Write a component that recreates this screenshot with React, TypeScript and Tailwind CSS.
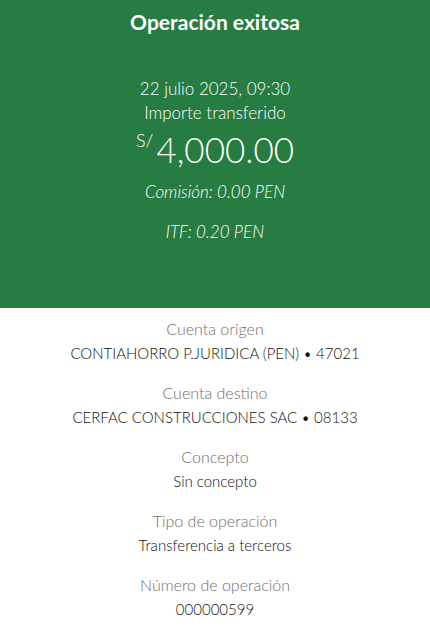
const DETAILS = [
  { label: "Cuenta origen", value: "CONTIAHORRO P.JURIDICA (PEN) • 47021" },
  { label: "Cuenta destino", value: "CERFAC CONSTRUCCIONES SAC • 08133" },
  { label: "Concepto", value: "Sin concepto" },
  { label: "Tipo de operación", value: "Transferencia a terceros" },
  { label: "Número de operación", value: "000000599" },
];

export default function App() {
  return (
    <div className="w-[430px] h-[629px] overflow-hidden bg-white font-['Lato','Noto_Sans',sans-serif]">
      <header className="h-[308px] bg-[#277c42] text-white flex flex-col items-center">
        <h1 className="mt-[10px] h-[24px] leading-[24px] text-[21px] font-bold">Operación exitosa</h1>
        <p className="mt-[43px] leading-[24px] text-[17px] font-light">22 julio 2025, 09:30</p>
        <p className="leading-[24px] text-[17px] font-light">Importe transferido</p>
        <div className="mt-[2px] flex items-start h-[44px]">
          <span className="text-[18px] font-light leading-[22px] mt-[2px] mr-[3px]">S/</span>
          <span className="text-[35px] font-light leading-[44px]">4,000.00</span>
        </div>
        <p className="mt-[9px] leading-[24px] text-[17px] font-light italic">Comisión: 0.00 PEN</p>
        <p className="mt-[16px] leading-[24px] text-[17px] font-light italic">ITF: 0.20 PEN</p>
      </header>
      <div className="flex flex-col items-center pt-[9px] gap-[16px]">
        {DETAILS.map(({ label, value }) => (
          <div key={label} className="flex flex-col items-center">
            <span className="leading-[24px] text-[16px] font-light text-[#6e6e6e]">{label}</span>
            <span className="leading-[24px] text-[15px] font-light text-[#111111]">{value}</span>
          </div>
        ))}
      </div>
    </div>
  );
}
